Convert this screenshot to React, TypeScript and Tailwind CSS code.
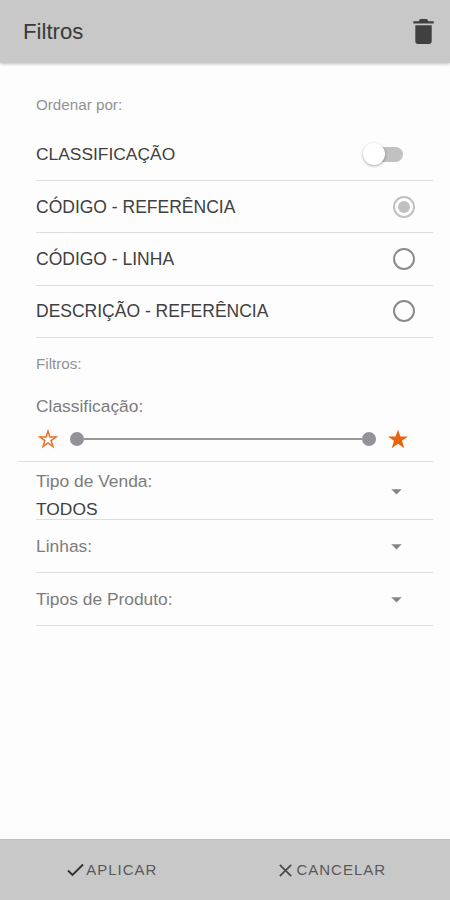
import React, { useState } from 'react';

const sortOptions = ['CÓDIGO - REFERÊNCIA', 'CÓDIGO - LINHA', 'DESCRIÇÃO - REFERÊNCIA'];

function TrashIcon() {
  return (
    <svg width="21" height="27" viewBox="0 0 21 27" fill="#404040">
      <path d="M0.3 3.3H5.7L7 1H14L15.3 3.3H20.7V5.4H0.3Z" />
      <path d="M2.3 7.2H18.7V23.3C18.7 24.9 17.6 26 16 26H5C3.4 26 2.3 24.9 2.3 23.3Z" />
    </svg>
  );
}

function StarIcon({ filled = false }: { filled?: boolean }) {
  return (
    <svg width="24" height="24" viewBox="0 0 24 24">
      {filled ? (
        <path
          fill="#e8650e"
          d="M12 2.4L14.4 9.4H22L16 13.8L18.3 21.2L12 16.8L5.7 21.2L8 13.8L2 9.4H9.6Z"
        />
      ) : (
        <path
          fill="none"
          stroke="#e8702a"
          strokeWidth="1.5"
          d="M12 4.2L13.9 10H20.1L15.1 13.6L17 19.5L12 15.9L7 19.5L8.9 13.6L3.9 10H10.1Z"
        />
      )}
    </svg>
  );
}

function Radio({ selected }: { selected: boolean }) {
  return (
    <span
      className={`flex h-[22px] w-[22px] items-center justify-center rounded-full border-2 ${
        selected ? 'border-[#c0c0c0]' : 'border-[#8a8a8a]'
      }`}
    >
      {selected && <span className="h-3 w-3 rounded-full bg-[#c0c0c0]" />}
    </span>
  );
}

function Caret() {
  return (
    <svg className="mt-[2px]" width="11" height="6" viewBox="0 0 11 6" fill="#858585">
      <path d="M0.3 0.3H10.7L5.5 5.6Z" />
    </svg>
  );
}

function SelectRow({ label }: { label: string }) {
  return (
    <div className="ml-9 mr-[17px] flex h-[53px] items-center justify-between border-b border-[#dedede] pr-[31px]">
      <span className="text-[17.4px] text-[#7c7c7c]">{label}</span>
      <Caret />
    </div>
  );
}

export default function App() {
  const [selected, setSelected] = useState(0);
  const [byRating, setByRating] = useState(false);

  return (
    <div className="flex h-[900px] w-[450px] flex-col overflow-hidden bg-[#fdfdfd] font-['Liberation_Sans',Arial,sans-serif] leading-5">
      <header className="flex h-[63px] shrink-0 items-center justify-between bg-[#c8c8c8] pl-[23px] pr-4 shadow-[0_1px_3px_rgba(0,0,0,0.25)]">
        <h1 className="text-[22.2px] leading-6 text-[#3a3a3a]">Filtros</h1>
        <button aria-label="Limpar">
          <TrashIcon />
        </button>
      </header>

      <main className="flex-1">
        <section className="ml-9 mr-[17px] pt-8">
          <h2 className="h-[33px] text-[15.2px] text-[#929292]">Ordenar por:</h2>
          <div className="flex h-[53px] items-center justify-between border-b border-[#dedede] pr-[30px]">
            <span className="text-[17.4px] text-[#404040]">CLASSIFICAÇÃO</span>
            <button
              aria-label="Classificação"
              onClick={() => setByRating(!byRating)}
              className="flex h-[15px] w-9 items-center rounded-full bg-[#c1c1c1]"
            >
              <span
                className={`h-[22px] w-[22px] shrink-0 rounded-full bg-white shadow-[0_1px_3px_rgba(0,0,0,0.35)] ${
                  byRating ? 'ml-[18px]' : '-ml-1'
                }`}
              />
            </button>
          </div>
          {sortOptions.map((option, i) => (
            <button
              key={option}
              onClick={() => setSelected(i)}
              className="flex h-[52.4px] w-full items-center justify-between border-b border-[#dedede] pr-[18px]"
            >
              <span className="text-[17.5px] text-[#404040]">{option}</span>
              <Radio selected={selected === i} />
            </button>
          ))}
        </section>

        <section className="ml-[18px] mr-[17px] h-[124px] border-b border-[#dedede] pl-[18px] pt-4">
          <h2 className="h-[42px] text-[15.2px] text-[#929292]">Filtros:</h2>
          <p className="text-[17.4px] text-[#7c7c7c]">Classificação:</p>
          <div className="mt-[11px] flex items-center pr-[23px]">
            <StarIcon />
            <div className="ml-[10px] mr-[10px] flex flex-1 items-center">
              <span className="h-[14px] w-[14px] rounded-full bg-[#929398]" />
              <span className="h-[2px] flex-1 bg-[#97979c]" />
              <span className="h-[14px] w-[14px] rounded-full bg-[#929398]" />
            </div>
            <StarIcon filled />
          </div>
        </section>

        <div className="ml-9 mr-[17px] flex h-[58px] items-center justify-between border-b border-[#dedede] pr-[31px]">
          <div className="pt-2">
            <p className="h-7 text-[17.4px] text-[#7c7c7c]">Tipo de Venda:</p>
            <p className="text-[17.4px] text-[#404040]">TODOS</p>
          </div>
          <Caret />
        </div>
        <SelectRow label="Linhas:" />
        <SelectRow label="Tipos de Produto:" />
      </main>

      <footer className="flex h-[61px] shrink-0 border-t border-[#bebebe] bg-[#c8c8c8] text-[15px] tracking-[1px] text-[#585858]">
        <button className="flex flex-1 items-center justify-center gap-[2px] pl-[2px]">
          <svg width="17" height="14" viewBox="0 0 17 14" fill="none" stroke="#303030" strokeWidth="1.9">
            <path d="M1 7.5L5.5 12L16 1.5" />
          </svg>
          APLICAR
        </button>
        <button className="flex flex-1 items-center justify-center gap-1 pr-[7px]">
          <svg width="13" height="13" viewBox="0 0 13 13" fill="none" stroke="#484848" strokeWidth="1.7">
            <path d="M0.8 0.8L12.2 12.2M12.2 0.8L0.8 12.2" />
          </svg>
          CANCELAR
        </button>
      </footer>
    </div>
  );
}
